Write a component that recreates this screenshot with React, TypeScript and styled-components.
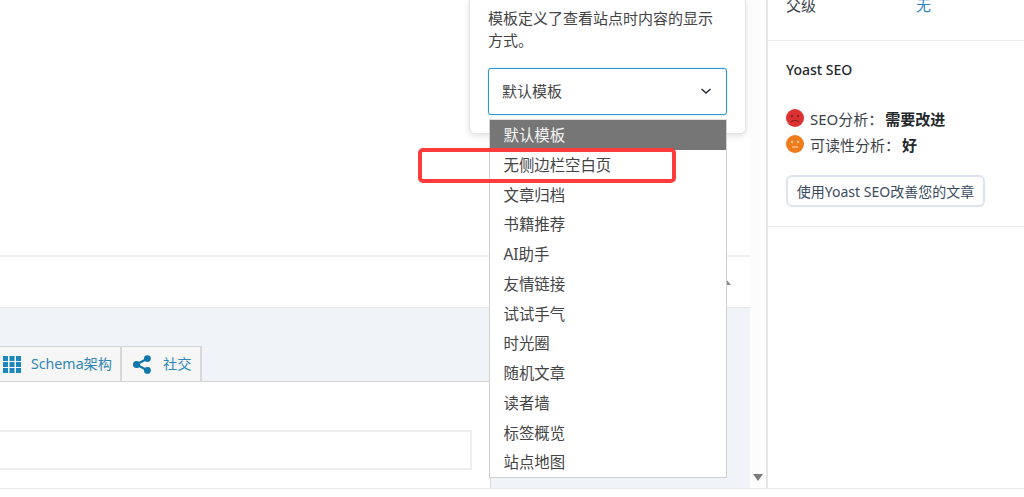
import React from 'react'
import styled, { createGlobalStyle } from 'styled-components'

const GlobalStyle = createGlobalStyle`
  html, body {
    margin: 0;
    padding: 0;
    background: #fff;
    overflow: hidden;
  }
  * {
    box-sizing: border-box;
  }
`

const Page = styled.div`
  position: relative;
  width: 1024px;
  height: 497px;
  overflow: hidden;
  background: #fff;
  font-family: "Noto Sans", "Noto Sans CJK SC", sans-serif;
  color: #3c434a;
`

const Workspace = styled.div`
  display: flex;
  height: 489px;
  border-bottom: 1px solid #e8e8e8;
`

const Main = styled.div`
  display: flex;
  flex-direction: column;
  width: 750px;
`

const Blank = styled.div`
  height: 257px;
  border-bottom: 2px solid #f0f0f0;
`

const ToggleBar = styled.div`
  display: flex;
  justify-content: flex-end;
  align-items: center;
  height: 51px;
  padding: 0 19px 0 0;
  border-bottom: 1px solid #e6e8ec;
`

const Metabox = styled.div`
  flex: 1;
  background: #f0f3f8;
`

const EditorColumn = styled.div`
  display: flex;
  flex-direction: column;
  width: 491px;
  height: 100%;
  padding-top: 38px;
`

const TabRow = styled.div`
  display: flex;
  height: 36px;
  border-bottom: 1px solid #d4d4d4;
`

const Tab = styled.div<{ $width: number; $inset: number; $gap: number }>`
  display: flex;
  align-items: center;
  gap: ${p => p.$gap}px;
  width: ${p => p.$width}px;
  padding-left: ${p => p.$inset}px;
  margin-bottom: -1px;
  background: #f6f6f6;
  border-top: 1px solid #d4d4d4;
  border-right: 2px solid #d8d8d8;
  border-bottom: 1px solid #d4d4d4;
  font-size: 14.2px;
  line-height: 32px;
  color: #2f86b5;
  white-space: nowrap;
`

const EditorPanel = styled.div`
  flex: 1;
  padding-top: 48px;
  background: #fff;
  border-right: 1px solid #dcdcdc;
`

const TitleInput = styled.div`
  width: 472px;
  height: 40px;
  background: #fff;
  border: 2px solid #eeeeee;
  border-left: none;
`

const ScrollGutter = styled.div`
  display: flex;
  align-items: flex-end;
  justify-content: center;
  width: 16px;
  padding-bottom: 7px;
  background: #fcfcfc;
`

const Sidebar = styled.aside`
  flex: 1;
  border-left: 2px solid #e6e6e6;
`

const ParentRow = styled.div`
  display: flex;
  height: 46px;
  margin-top: -5px;
  padding: 0 18px;
  border-bottom: 1px solid #e8eaee;
  font-size: 15px;
  line-height: 20px;
`

const ParentLabel = styled.span`
  width: 130px;
`

const ParentLink = styled.span`
  color: #3582c4;
`

const SeoSection = styled.section`
  display: flex;
  flex-direction: column;
  align-items: flex-start;
  height: 186px;
  padding: 19px 18px 0;
  border-bottom: 1px solid #e8eaee;
`

const SeoTitle = styled.h2`
  margin: 0 0 25px;
  font-size: 14px;
  font-weight: 500;
  line-height: 20px;
  color: #23282d;
`

const ScoreRow = styled.div`
  display: flex;
  align-items: center;
  height: 26px;
  font-size: 15px;
`

const ScoreLabel = styled.span`
  margin: 0 2px 0 6px;
`

const ScoreValue = styled.strong`
  font-weight: 700;
  color: #23282d;
`

const ImproveButton = styled.button`
  width: 199px;
  height: 32px;
  margin-top: 18px;
  padding: 0;
  font-family: inherit;
  font-size: 14px;
  color: #3a4a60;
  white-space: nowrap;
  background: #fff;
  border: 2px solid #dde4f0;
  border-radius: 6px;
`

const Popover = styled.div`
  position: absolute;
  top: -1px;
  left: 469px;
  width: 277px;
  height: 135px;
  padding: 7px 18px 0 18px;
  background: #fff;
  border: 1px solid #e4e4e4;
  border-radius: 0 0 6px 6px;
  box-shadow: 0 2px 6px rgba(0, 0, 0, 0.12);
`

const Hint = styled.p`
  margin: 0 0 17px;
  font-size: 15px;
  line-height: 22px;
  color: #444;
`

const SelectBox = styled.div`
  display: flex;
  align-items: center;
  justify-content: space-between;
  width: 239px;
  height: 47px;
  padding: 0 14px 2px 13px;
  font-size: 15px;
  color: #444;
  border: 1px solid #2a96d2;
  border-radius: 3px;
  box-shadow: 0 0 1px #2a96d2;
`

const Dropdown = styled.ul`
  position: absolute;
  top: 119px;
  left: 489px;
  width: 238px;
  margin: 0;
  padding: 0;
  list-style: none;
  background: #fff;
  border: 1px solid #d0d0d0;
  border-top-color: #e0e0e0;
`

const Option = styled.li<{ $selected?: boolean }>`
  height: 29.75px;
  padding: 1px 0 0 13.5px;
  font-size: 15.4px;
  line-height: 29.75px;
  color: ${p => (p.$selected ? '#f4f4f4' : '#444')};
  background: ${p => (p.$selected ? '#767676' : 'transparent')};
`

const Highlight = styled.div`
  position: absolute;
  top: 148px;
  left: 418px;
  width: 258px;
  height: 35px;
  border: 4px solid #ff3b3b;
  border-radius: 5px;
`

const options = [
  '默认模板',
  '无侧边栏空白页',
  '文章归档',
  '书籍推荐',
  'AI助手',
  '友情链接',
  '试试手气',
  '时光圈',
  '随机文章',
  '读者墙',
  '标签概览',
  '站点地图',
]

const GridIcon = () => (
  <svg width="18" height="17" viewBox="0 0 18 17" fill="#1d86bd">
    {[0, 6.5, 13].map(x =>
      [0, 6, 12].map(y => <rect key={`${x}-${y}`} x={x} y={y} width="5" height="5" />)
    )}
  </svg>
)

const ShareIcon = () => (
  <svg width="18" height="19" viewBox="0 0 18 19" fill="#0f76ac">
    <path d="M3.5 9.5 14.5 3.5M3.5 9.5 14.5 15.5" stroke="#0f76ac" strokeWidth="2" />
    <circle cx="3.6" cy="9.5" r="3.6" />
    <circle cx="14.4" cy="3.6" r="3.4" />
    <circle cx="14.4" cy="15.4" r="3.4" />
  </svg>
)

const Face = ({ color, sad }: { color: string; sad?: boolean }) => (
  <svg width="18" height="18" viewBox="0 0 18 18">
    <circle cx="9" cy="9" r="9" fill={color} />
    <circle cx="6" cy="7" r="1.2" fill={sad ? '#7a1d1d' : '#fbd9b8'} fillOpacity="0.8" />
    <circle cx="12" cy="7" r="1.2" fill={sad ? '#7a1d1d' : '#fbd9b8'} fillOpacity="0.8" />
    {sad ? (
      <path d="M5.2 13.2C6.6 10.8 11.4 10.8 12.8 13.2" fill="none" stroke="#7a1d1d" strokeOpacity="0.8" strokeWidth="1.3" />
    ) : (
      <path d="M6 12h6" fill="none" stroke="#fbd9b8" strokeOpacity="0.85" strokeWidth="1.3" />
    )}
  </svg>
)

const App = () => (
  <Page>
    <GlobalStyle />
    <Workspace>
      <Main>
        <Blank />
        <ToggleBar>
          <svg width="5" height="6" viewBox="0 0 5 6" fill="#8a8a8a">
            <path d="M0 0 5 6H0Z" />
          </svg>
        </ToggleBar>
        <Metabox>
          <EditorColumn>
            <TabRow>
              <Tab $width={122} $inset={3} $gap={10}>
                <GridIcon />
                Schema架构
              </Tab>
              <Tab $width={80} $inset={11} $gap={12}>
                <ShareIcon />
                社交
              </Tab>
            </TabRow>
            <EditorPanel>
              <TitleInput />
            </EditorPanel>
          </EditorColumn>
        </Metabox>
      </Main>
      <ScrollGutter>
        <svg width="10" height="7" viewBox="0 0 10 7" fill="#7c7c7c">
          <path d="M0 0H10L5 7Z" />
        </svg>
      </ScrollGutter>
      <Sidebar>
        <ParentRow>
          <ParentLabel>父级</ParentLabel>
          <ParentLink>无</ParentLink>
        </ParentRow>
        <SeoSection>
          <SeoTitle>Yoast SEO</SeoTitle>
          <ScoreRow>
            <Face color="#dc3232" sad />
            <ScoreLabel>SEO分析：</ScoreLabel>
            <ScoreValue>需要改进</ScoreValue>
          </ScoreRow>
          <ScoreRow>
            <Face color="#ee7c1b" />
            <ScoreLabel>可读性分析：</ScoreLabel>
            <ScoreValue>好</ScoreValue>
          </ScoreRow>
          <ImproveButton>使用Yoast SEO改善您的文章</ImproveButton>
        </SeoSection>
      </Sidebar>
    </Workspace>
    <Popover>
      <Hint>模板定义了查看站点时内容的显示方式。</Hint>
      <SelectBox>
        默认模板
        <svg width="12" height="8" viewBox="0 0 12 8" fill="none" stroke="#2c3338" strokeWidth="1.6">
          <path d="M1.5 2 6 6 10.5 2" />
        </svg>
      </SelectBox>
    </Popover>
    <Dropdown>
      {options.map((name, i) => (
        <Option key={name} $selected={i === 0}>{name}</Option>
      ))}
    </Dropdown>
    <Highlight />
  </Page>
)

export default App
